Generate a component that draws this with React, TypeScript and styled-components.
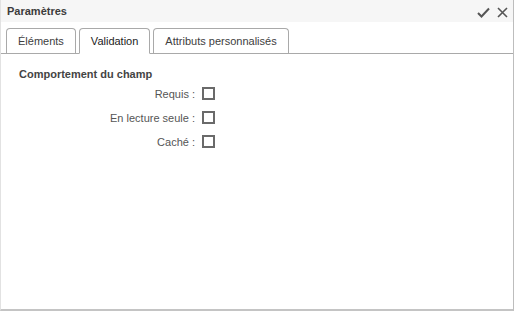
import React from 'react'
import styled, { createGlobalStyle } from 'styled-components'

const GlobalStyle = createGlobalStyle`
  html, body {
    margin: 0;
    padding: 0;
    background: #fff;
  }
  body {
    font-family: "Liberation Sans", Arial, sans-serif;
  }
`

const Dialog = styled.div`
  box-sizing: border-box;
  width: 514px;
  height: 311px;
  border-left: 1px solid #e2e2e2;
  border-right: 1px solid #bdbdbd;
  border-bottom: 2px solid #c4c4c4;
  background: #fff;
  display: flex;
  flex-direction: column;
`

const TitleBar = styled.div`
  height: 22px;
  background: #f6f6f6;
  display: flex;
  align-items: center;
  justify-content: space-between;
  padding: 0 5px 0 6px;
`

const Title = styled.div`
  font-size: 11px;
  font-weight: bold;
  color: #3c3c3c;
`

const Actions = styled.div`
  display: flex;
  align-items: center;
  gap: 7px;
  margin-top: 2px;
`

const TabBar = styled.div`
  display: flex;
  gap: 3px;
  padding: 6px 0 0 5px;
  border-bottom: 1px solid #a9a9a9;
  height: 25px;
`

const Tab = styled.div<{ $active?: boolean }>`
  box-sizing: border-box;
  height: ${p => (p.$active ? '26px' : '25px')};
  padding: 0 11px;
  border: 1px solid #a9a9a9;
  border-bottom: ${p => (p.$active ? '1px solid #fff' : 'none')};
  border-radius: 4px 4px 0 0;
  background: #fff;
  font-size: 11px;
  color: ${p => (p.$active ? '#222' : '#404040')};
  display: flex;
  align-items: center;
`

const Content = styled.div`
  padding: 14px 18px;
`

const SectionTitle = styled.div`
  font-size: 11px;
  font-weight: bold;
  color: #444;
  margin-bottom: 7px;
`

const FieldGrid = styled.div`
  display: grid;
  grid-template-columns: 176px 13px;
  column-gap: 7px;
  row-gap: 11px;
  align-items: center;
`

const Label = styled.div`
  font-size: 11px;
  color: #555;
  text-align: right;
`

const Box = styled.div`
  box-sizing: border-box;
  width: 13px;
  height: 13px;
  border: 2px solid #6a6a6a;
  background: #fff;
`

const fields = ['Requis :', 'En lecture seule :', 'Caché :']

const App = () => {
  return (
    <>
      <GlobalStyle />
      <Dialog>
        <TitleBar>
          <Title>Paramètres</Title>
          <Actions>
            <svg width="13" height="11" viewBox="0 0 13 11">
              <path d="M1 6 L4.5 9.5 L12 1.5" fill="none" stroke="#555" strokeWidth="2" />
            </svg>
            <svg width="11" height="11" viewBox="0 0 11 11">
              <path d="M1 1 L10 10 M10 1 L1 10" fill="none" stroke="#555" strokeWidth="1.6" />
            </svg>
          </Actions>
        </TitleBar>
        <TabBar>
          <Tab>Éléments</Tab>
          <Tab $active>Validation</Tab>
          <Tab>Attributs personnalisés</Tab>
        </TabBar>
        <Content>
          <SectionTitle>Comportement du champ</SectionTitle>
          <FieldGrid>
            {fields.map(f => (
              <React.Fragment key={f}>
                <Label>{f}</Label>
                <Box />
              </React.Fragment>
            ))}
          </FieldGrid>
        </Content>
      </Dialog>
    </>
  )
}

export default App
